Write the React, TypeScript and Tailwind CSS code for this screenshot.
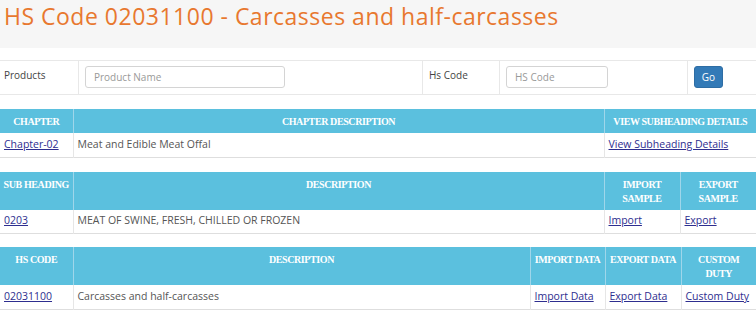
import React from 'react';

const link = 'text-[#2e2e8f] underline';
const th = 'border-l border-[#9fd6ea] first:border-l-0 px-0.5 pt-[6px] pb-1 align-top text-center font-bold uppercase text-white text-[10px] leading-[14px] tracking-[-0.4px]';
const td = 'border-l border-[#e6e6e6] first:border-l-0 px-1 h-6 align-middle text-[10.5px] text-[#555] whitespace-nowrap';

type Col = { label: string; w: number; wrap?: boolean };

const DataTable = ({ cols, row, headH }: { cols: Col[]; row: React.ReactNode[]; headH: number }) => (
  <table className="w-full table-fixed border-collapse">
    <colgroup>
      {cols.map((c, i) => (
        <col key={i} style={{ width: c.w }} />
      ))}
    </colgroup>
    <thead>
      <tr className="bg-[#5bc0de]" style={{ height: headH }}>
        {cols.map((c, i) => (
          <th
            key={i}
            className={`${th} ${c.wrap ? 'px-3' : 'whitespace-nowrap'}`}
            style={{ fontFamily: '"Liberation Serif", "Times New Roman", serif' }}
          >
            {c.label}
          </th>
        ))}
      </tr>
    </thead>
    <tbody>
      <tr className="border-b border-[#dedede]">
        {row.map((cell, i) => (
          <td key={i} className={td}>
            {cell}
          </td>
        ))}
      </tr>
    </tbody>
  </table>
);

export default function App() {
  return (
    <div className="w-[756px] h-[318px] bg-white overflow-hidden" style={{ fontFamily: '"Open Sans", "Liberation Sans", sans-serif' }}>
      <div className="h-12 bg-[#f6f6f6] pl-[4px] pt-[1px]">
        <h1 className="text-[23px] leading-[30px] tracking-[0.5px] text-[#e8782f]">HS Code 02031100 - Carcasses and half-carcasses</h1>
      </div>

      <div className="mt-3 flex h-[35px] border-y border-[#e8e8e8] text-[10px] text-[#444]">
        <div className="w-[79px] border-r border-[#e8e8e8] pl-1 pt-[7px]">Products</div>
        <div className="w-[344px] border-r border-[#e8e8e8] pl-[6px] pt-[5px]">
          <div className="w-[200px] h-[22px] rounded-[3px] border border-[#d4d4d4] pl-[8px] flex items-center text-[#999]">Product Name</div>
        </div>
        <div className="w-[77px] border-r border-[#e8e8e8] pl-[6px] pt-[7px]">Hs Code</div>
        <div className="w-[188px] border-r border-[#e8e8e8] pl-[6px] pt-[5px]">
          <div className="w-[102px] h-[22px] rounded-[3px] border border-[#d4d4d4] pl-[8px] flex items-center text-[#999]">HS Code</div>
        </div>
        <div className="flex-1 pl-[6px] pt-[5px]">
          <button type="button" className="w-[29px] h-[22px] rounded-[3px] bg-[#337ab7] border border-[#2e6da4] text-white text-[10px]">Go</button>
        </div>
      </div>

      <div className="mt-[14px]">
        <DataTable
          headH={23}
          cols={[
            { label: 'Chapter', w: 73 },
            { label: 'Chapter Description', w: 531 },
            { label: 'View Subheading Details', w: 152 },
          ]}
          row={[
            <a className={link}>Chapter-02</a>,
            'Meat and Edible Meat Offal',
            <a className={link}>View Subheading Details</a>,
          ]}
        />
      </div>

      <div className="mt-[14px]">
        <DataTable
          headH={36}
          cols={[
            { label: 'Sub Heading', w: 73 },
            { label: 'Description', w: 531 },
            { label: 'Import Sample', w: 76, wrap: true },
            { label: 'Export Sample', w: 76, wrap: true },
          ]}
          row={[
            <a className={link}>0203</a>,
            'MEAT OF SWINE, FRESH, CHILLED OR FROZEN',
            <a className={link}>Import</a>,
            <a className={link}>Export</a>,
          ]}
        />
      </div>

      <div className="mt-[13px]">
        <DataTable
          headH={36}
          cols={[
            { label: 'HS Code', w: 73 },
            { label: 'Description', w: 457 },
            { label: 'Import Data', w: 75 },
            { label: 'Export Data', w: 76 },
            { label: 'Custom Duty', w: 75, wrap: true },
          ]}
          row={[
            <a className={link}>02031100</a>,
            'Carcasses and half-carcasses',
            <a className={link}>Import Data</a>,
            <a className={link}>Export Data</a>,
            <a className={link}>Custom Duty</a>,
          ]}
        />
      </div>
    </div>
  );
}
